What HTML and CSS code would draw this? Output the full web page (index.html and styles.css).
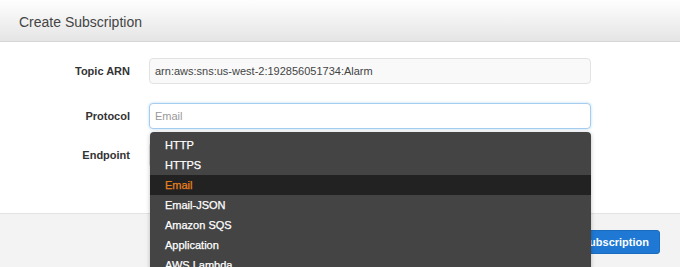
FILE: index.html
```html
<!DOCTYPE html>
<html lang="en">
<head>
    <meta charset="UTF-8">
    <meta name="viewport" content="width=device-width, initial-scale=1.0">
    <title>Create Subscription</title>
    <link rel="stylesheet" href="styles.css">
</head>
<body>
    <div class="page">
        <div class="modal-header">
            <h1>Create Subscription</h1>
        </div>

        <div class="modal-body">
            <div class="form-row">
                <label>Topic ARN</label>
                <input class="field readonly" type="text" value="arn:aws:sns:us-west-2:192856051734:Alarm" readonly>
            </div>

            <div class="form-row row-protocol">
                <label>Protocol</label>
                <div class="select-wrap">
                    <input class="field focused" type="text" placeholder="Email">
                    <ul class="dropdown">
                        <li>HTTP</li>
                        <li>HTTPS</li>
                        <li class="active">Email</li>
                        <li>Email-JSON</li>
                        <li>Amazon SQS</li>
                        <li>Application</li>
                        <li>AWS Lambda</li>
                        <li>SMS</li>
                    </ul>
                </div>
            </div>

            <div class="form-row row-endpoint">
                <label>Endpoint</label>
                <input class="field" type="text">
            </div>
        </div>

        <div class="modal-footer">
            <button class="btn-primary">Create Subscription</button>
        </div>
    </div>
</body>
</html>
```

FILE: styles.css
```css
html, body {
    margin: 0;
    padding: 0;
    height: 100%;
    overflow: hidden;
}

body {
    font-family: "Liberation Sans", Arial, sans-serif;
    font-size: 11px;
    color: #333;
    background-color: #fff;
}

.page {
    height: 100vh;
    display: flex;
    flex-direction: column;
    overflow: hidden;
}

.modal-header {
    height: 41px;
    flex-shrink: 0;
    background: linear-gradient(#fefefe, #e5e5e5);
    border-bottom: 1px solid #d6d6d6;
    display: flex;
    align-items: center;
    padding-left: 19px;
}

.modal-header h1 {
    margin: 2px 0 0 0;
    font-size: 14px;
    font-weight: normal;
    color: #444;
}

.modal-body {
    padding: 16px 0 45px 0;
    border-bottom: 1px solid #e3e3e3;
}

.form-row {
    display: grid;
    grid-template-columns: 130px 442px;
    column-gap: 19px;
    align-items: center;
}

.form-row label {
    text-align: right;
    font-weight: bold;
    color: #333;
}

.row-protocol {
    margin-top: 19px;
}

.row-endpoint {
    margin-top: 13px;
}

.field {
    box-sizing: border-box;
    height: 26px;
    width: 100%;
    margin: 0;
    padding: 0 5px;
    font-family: inherit;
    font-size: 11px;
    color: #444;
    background-color: #fff;
    border: 1px solid #ddd;
    border-radius: 4px;
    outline: none;
}

.field::placeholder {
    color: #999;
}

.readonly {
    background-color: #f9f9f9;
    border-color: #e2e2e2;
}

.focused {
    border-color: #a6cdee;
    box-shadow: 0 0 3px #b9daf5;
}

.select-wrap {
    position: relative;
}

/* lista aberta do select */
.dropdown {
    position: absolute;
    top: 29px;
    left: 1px;
    right: 0;
    margin: 0;
    padding: 3px 0 0 0;
    list-style: none;
    background-color: #444;
    border-radius: 4px;
    box-shadow: 0 1px 4px rgba(0, 0, 0, 0.25);
    z-index: 10;
}

.dropdown li {
    height: 20px;
    line-height: 20px;
    padding-left: 15px;
    color: #fff;
    -webkit-text-stroke: 0.25px #fff;
}

.dropdown li.active {
    background-color: #222;
    color: #e8811f;
    -webkit-text-stroke: 0.25px #e8811f;
}

.modal-footer {
    flex: 1;
    background-color: #f3f3f3;
    display: flex;
    justify-content: flex-end;
    align-items: flex-start;
    padding: 16px 20px 0 0;
}

.btn-primary {
    height: 24px;
    padding: 0 10px;
    font-family: inherit;
    font-size: 11px;
    font-weight: bold;
    color: #fff;
    background-color: #1e78d4;
    border: 1px solid #1a6cbe;
    border-radius: 3px;
}
```
